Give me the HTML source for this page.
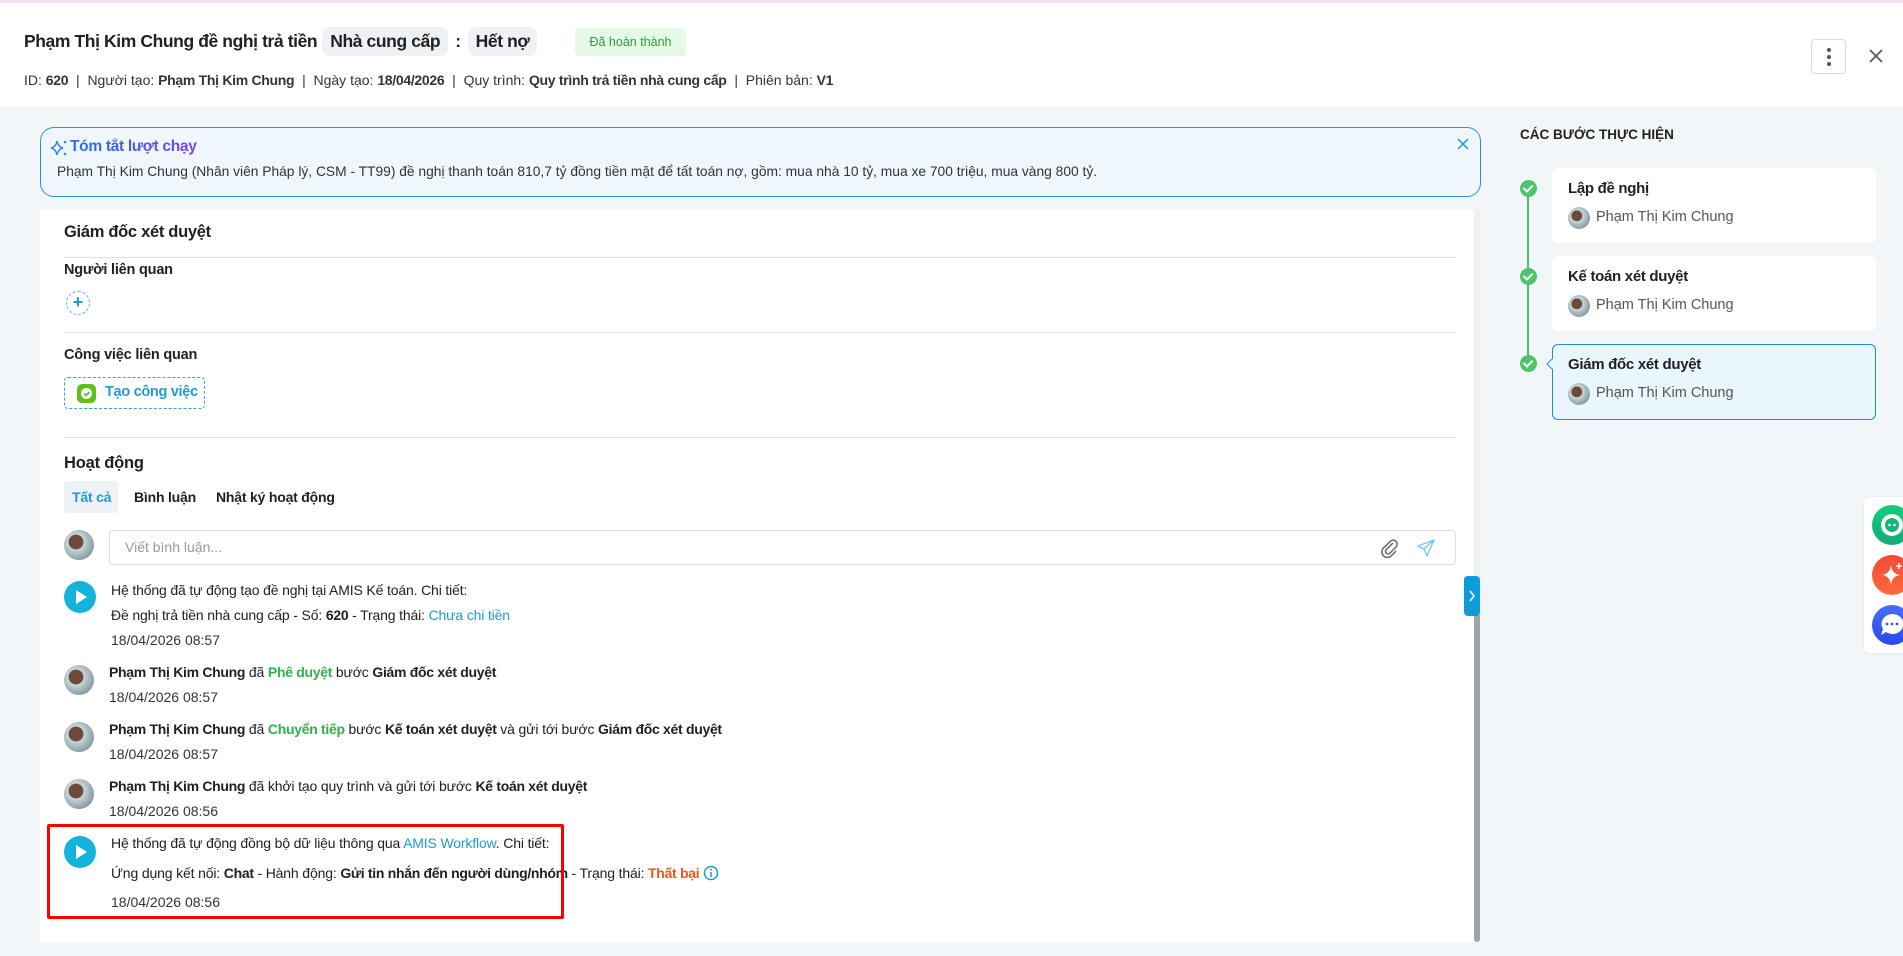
<!DOCTYPE html>
<html><head><meta charset="utf-8">
<style>
*{box-sizing:border-box;margin:0;padding:0}
body{width:1903px;height:956px;overflow:hidden;background:#f3f6f8;font-family:"Liberation Sans",sans-serif;color:#212121;position:relative;font-size:14px}
.a{position:absolute;white-space:nowrap}
b{font-weight:bold;letter-spacing:-0.3px}
.hdr{position:absolute;left:0;top:0;width:1903px;height:107px;background:#fff;border-top:3px solid #f6e2f3}
.trow{position:absolute;left:24px;top:27px;display:flex;align-items:center;height:29px;font-size:17.5px;font-weight:bold;letter-spacing:-0.4px;white-space:nowrap}
.chip{background:#eef1f5;border-radius:8px;height:29px;line-height:29px;padding:0 8px;margin-left:5px}
.av{position:absolute;width:30px;height:30px;border-radius:50%;background:radial-gradient(circle at 40% 40%,#6b4a3a 0 28%,#c9d6d9 30%,#8aa0a6 70%,#55656a 100%)}
.play{position:absolute;width:32px;height:32px;border-radius:50%;background:#14b3d9}
.play:after{content:"";position:absolute;left:12px;top:9px;border-left:11px solid #fff;border-top:7px solid transparent;border-bottom:7px solid transparent}
.line{position:absolute;left:64px;width:1392px;height:1px;background:#dcdfe3}
.card{position:absolute;left:1552px;width:324px;background:#fff;border-radius:6px}
.card .t{position:absolute;left:16px;top:12px;font-size:15px;font-weight:bold;letter-spacing:-0.3px}
.card .n{position:absolute;left:44px;top:41px;font-size:14.5px;color:#555}
.card .av{left:16px;top:39px;width:22px;height:22px}
.chk{position:absolute;left:1520px;width:17px;height:17px;border-radius:50%;background:#4cc56a}
.chk:after{content:"";position:absolute;left:5px;top:3px;width:4px;height:7px;border:solid #fff;border-width:0 2px 2px 0;transform:rotate(45deg)}
.g{color:#2eb24a}.bl{color:#1e9ad6}
.dt{color:#333;font-size:14px}
.tx{font-size:14px;letter-spacing:-0.15px}
</style></head><body>
<div class="hdr"></div>
<div class="trow"><span>Phạm Thị Kim Chung đề nghị trả tiền</span><span class="chip">Nhà cung cấp</span><span style="margin:0 2px 0 7px">:</span><span class="chip">Hết nợ</span></div>
<div class="a" style="left:575px;top:28px;width:111px;height:28px;background:#e4fae6;border-radius:4px;color:#2a9e3a;font-size:12.5px;text-align:center;line-height:28px">Đã hoàn thành</div>
<div class="a" style="left:24px;top:72px;font-size:14px;color:#333">ID: <b>620</b> &nbsp;| &nbsp;Người tạo: <b>Phạm Thị Kim Chung</b> &nbsp;| &nbsp;Ngày tạo: <b>18/04/2026</b> &nbsp;| &nbsp;Quy trình: <b>Quy trình trả tiền nhà cung cấp</b> &nbsp;| &nbsp;Phiên bản: <b>V1</b></div>
<div class="a" style="left:1811px;top:39px;width:35px;height:35px;border:1px solid #d6d9dd;border-radius:4px"><svg width="35" height="35"><circle cx="17" cy="10" r="2" fill="#555"/><circle cx="17" cy="17" r="2" fill="#555"/><circle cx="17" cy="24" r="2" fill="#555"/></svg></div>
<svg class="a" style="left:1868px;top:48px" width="16" height="16"><path d="M2 2L14 14M14 2L2 14" stroke="#555" stroke-width="1.6"/></svg>

<div class="a" style="left:40px;top:127px;width:1441px;height:70px;background:#eff7fd;border:1.5px solid #2a94d4;border-radius:14px"></div>
<svg class="a" style="left:50px;top:139px" width="18" height="18"><path d="M7 2Q8 8 13 9Q8 10 7 16Q6 10 1 9Q6 8 7 2Z" fill="none" stroke="#3b82f6" stroke-width="1.5"/><circle cx="15" cy="3" r="1.3" fill="#3b82f6"/><circle cx="15" cy="15" r="1.3" fill="#3b82f6"/></svg>
<div class="a" style="left:70px;top:138px;font-size:15.5px;font-weight:bold;letter-spacing:-0.3px;background:linear-gradient(90deg,#1f6ff2,#7b3ff2);-webkit-background-clip:text;color:transparent">Tóm tắt lượt chạy</div>
<div class="a" style="left:57px;top:164px;font-size:13.8px;color:#333">Phạm Thị Kim Chung (Nhân viên Pháp lý, CSM - TT99) đề nghị thanh toán 810,7 tỷ đồng tiền mặt để tất toán nợ, gồm: mua nhà 10 tỷ, mua xe 700 triệu, mua vàng 800 tỷ.</div>
<svg class="a" style="left:1457px;top:138px" width="12" height="12"><path d="M1 1L11 11M11 1L1 11" stroke="#1e9ad6" stroke-width="1.5"/></svg>

<div class="a" style="left:40px;top:210px;width:1434px;height:732px;background:#fff"></div>
<div class="a" style="left:1474px;top:210px;width:6px;height:732px;background:#f0f0f0"></div>
<div class="a" style="left:1474px;top:613px;width:6px;height:329px;background:#9ea5a7;border-radius:3px"></div>
<div class="a" style="left:1464px;top:576px;width:16px;height:40px;background:#0d9bdc;border-radius:4px"><svg width="16" height="40"><path d="M6 15L10 20L6 25" stroke="#fff" stroke-width="1.6" fill="none"/></svg></div>

<div class="a" style="left:64px;top:223px;font-size:16.5px;font-weight:bold;letter-spacing:-0.3px">Giám đốc xét duyệt</div>
<div class="line" style="top:257px"></div>
<div class="a" style="left:64px;top:262px;font-size:14.5px;font-weight:bold;letter-spacing:-0.2px">Người liên quan</div>
<div class="a" style="left:66px;top:291px;width:24px;height:24px;border:1.5px dashed #5fb6e6;border-radius:50%;color:#1e9ad6;font-size:18px;line-height:20px;text-align:center;font-weight:bold">+</div>
<div class="line" style="top:332px"></div>
<div class="a" style="left:64px;top:347px;font-size:14.5px;font-weight:bold;letter-spacing:-0.2px">Công việc liên quan</div>
<div class="a" style="left:64px;top:377px;width:141px;height:32px;border:1.5px dashed #3aa0dc;border-radius:4px"></div>
<div class="a" style="left:77px;top:384px;width:19px;height:19px;border-radius:5px;background:#5cc21a"><svg width="19" height="19"><circle cx="9.5" cy="9.5" r="5.5" fill="#fff"/><path d="M7 9.5L9 11.5L12.5 8" stroke="#5cc21a" stroke-width="1.8" fill="none"/></svg></div>
<div class="a" style="left:105px;top:384px;font-size:14.5px;font-weight:bold;letter-spacing:-0.3px;color:#1e9ad6">Tạo công việc</div>
<div class="line" style="top:437px"></div>

<div class="a" style="left:64px;top:454px;font-size:16.5px;font-weight:bold;letter-spacing:-0.2px">Hoạt động</div>
<div class="a" style="left:64px;top:481px;width:54px;height:32px;background:#eef2f7;border-radius:4px"></div>
<div class="a" style="left:72px;top:489px;font-size:14px;font-weight:bold;letter-spacing:-0.2px;color:#1e9ad6">Tất cả</div>
<div class="a" style="left:134px;top:489px;font-size:14px;font-weight:bold;letter-spacing:-0.2px">Bình luận</div>
<div class="a" style="left:216px;top:489px;font-size:14px;font-weight:bold;letter-spacing:-0.2px">Nhật ký hoạt động</div>

<div class="av" style="left:64px;top:530px"></div>
<div class="a" style="left:109px;top:530px;width:1347px;height:35px;border:1px solid #d9dce0;border-radius:4px"></div>
<div class="a" style="left:125px;top:539px;font-size:14px;color:#999">Viết bình luận...</div>
<svg class="a" style="left:1380px;top:538px" width="20" height="20"><path d="M13 5L6 12a2.5 2.5 0 0 0 3.5 3.5L16 9a4 4 0 0 0-5.7-5.7L3.5 10a5.5 5.5 0 0 0 7.8 7.8L16 13" fill="none" stroke="#666" stroke-width="1.5"/></svg>
<svg class="a" style="left:1416px;top:538px" width="20" height="20"><path d="M18 2L2 8L8 11L11 18Z M8 11L18 2" fill="none" stroke="#7cc4ee" stroke-width="1.4" stroke-linejoin="round"/></svg>

<div class="play" style="left:64px;top:581px"></div>
<div class="a tx" style="left:111px;top:582px">Hệ thống đã tự động tạo đề nghị tại AMIS Kế toán. Chi tiết:</div>
<div class="a tx" style="left:111px;top:607px">Đề nghị trả tiền nhà cung cấp - Số: <b>620</b> - Trạng thái: <span class="bl">Chưa chi tiền</span></div>
<div class="a dt" style="left:111px;top:632px">18/04/2026 08:57</div>

<div class="av" style="left:64px;top:665px"></div>
<div class="a tx" style="left:109px;top:664px"><b>Phạm Thị Kim Chung</b> đã <b class="g">Phê duyệt</b> bước <b>Giám đốc xét duyệt</b></div>
<div class="a dt" style="left:109px;top:689px">18/04/2026 08:57</div>

<div class="av" style="left:64px;top:722px"></div>
<div class="a tx" style="left:109px;top:721px"><b>Phạm Thị Kim Chung</b> đã <b class="g">Chuyển tiếp</b> bước <b>Kế toán xét duyệt</b> và gửi tới bước <b>Giám đốc xét duyệt</b></div>
<div class="a dt" style="left:109px;top:746px">18/04/2026 08:57</div>

<div class="av" style="left:64px;top:779px"></div>
<div class="a tx" style="left:109px;top:778px"><b>Phạm Thị Kim Chung</b> đã khởi tạo quy trình và gửi tới bước <b>Kế toán xét duyệt</b></div>
<div class="a dt" style="left:109px;top:803px">18/04/2026 08:56</div>

<div class="play" style="left:64px;top:836px"></div>
<div class="a tx" style="left:111px;top:835px">Hệ thống đã tự động đồng bộ dữ liệu thông qua <span class="bl">AMIS Workflow</span>. Chi tiết:</div>
<div class="a tx" style="left:111px;top:865px">Ứng dụng kết nối: <b>Chat</b> - Hành động: <b>Gửi tin nhắn đến người dùng/nhóm</b> - Trạng thái: <b style="color:#f0541e">Thất bại</b> <svg width="16" height="16" style="vertical-align:-3px"><circle cx="8" cy="8" r="6.5" fill="none" stroke="#1e9ad6" stroke-width="1.5"/><path d="M8 7V12" stroke="#1e9ad6" stroke-width="1.6"/><circle cx="8" cy="4.6" r="1" fill="#1e9ad6"/></svg></div>
<div class="a dt" style="left:111px;top:894px">18/04/2026 08:56</div>
<div class="a" style="left:47px;top:824px;width:517px;height:95px;border:3px solid #f00;border-radius:2px"></div>

<div class="a" style="left:1520px;top:127px;font-size:13.5px;font-weight:bold;color:#222">CÁC BƯỚC THỰC HIỆN</div>
<div class="a" style="left:1527px;top:196px;width:1.5px;height:160px;background:#4cc56a"></div>
<div class="chk" style="top:180px"></div>
<div class="chk" style="top:268px"></div>
<div class="chk" style="top:355px"></div>
<div class="card" style="top:168px;height:75px"><div class="t">Lập đề nghị</div><div class="av"></div><div class="n">Phạm Thị Kim Chung</div></div>
<div class="card" style="top:256px;height:75px"><div class="t">Kế toán xét duyệt</div><div class="av"></div><div class="n">Phạm Thị Kim Chung</div></div>
<div class="card" style="top:344px;height:76px;background:#eaf6fe;border:1px solid #1a8fd6"><div class="t" style="left:15px;top:11px">Giám đốc xét duyệt</div><div class="av" style="left:15px;top:38px"></div><div class="n" style="left:43px;top:40px">Phạm Thị Kim Chung</div></div>
<div class="a" style="left:1548px;top:360px;width:8px;height:8px;background:#eaf6fe;border-left:1px solid #1a8fd6;border-bottom:1px solid #1a8fd6;transform:rotate(45deg)"></div>

<div class="a" style="left:1864px;top:497px;width:50px;height:156px;background:#fff;border-radius:6px;box-shadow:0 0 4px rgba(0,0,0,.08)"></div>
<div class="a" style="left:1872px;top:505px;width:40px;height:40px;border-radius:50%;background:linear-gradient(#12d07a,#14a97a)"><svg width="40" height="40"><circle cx="20" cy="20" r="11" fill="#fff"/><circle cx="20" cy="20" r="7" fill="#13b779"/><circle cx="17.5" cy="20" r="1.3" fill="#fff"/><circle cx="22.5" cy="20" r="1.3" fill="#fff"/></svg></div>
<div class="a" style="left:1872px;top:555px;width:40px;height:40px;border-radius:50%;background:linear-gradient(#f04a3a,#ff6a3a)"><svg width="40" height="40"><path d="M19 10Q20 19 28 20Q20 21 19 30Q18 21 10 20Q18 19 19 10Z" fill="#fff"/><path d="M27 8L27 14M24 11L30 11" stroke="#fff" stroke-width="1.5"/></svg></div>
<div class="a" style="left:1872px;top:605px;width:40px;height:40px;border-radius:50%;background:linear-gradient(#4a6cf7,#2a4af0)"><svg width="40" height="40"><path d="M20 9a11 10 0 1 1-6 18l-5 3 2-6a11 10 0 0 1 9-15z" fill="#fff"/><circle cx="15" cy="19" r="1.4" fill="#3a5af5"/><circle cx="20" cy="19" r="1.4" fill="#3a5af5"/><circle cx="25" cy="19" r="1.4" fill="#3a5af5"/></svg></div>
</body></html>
